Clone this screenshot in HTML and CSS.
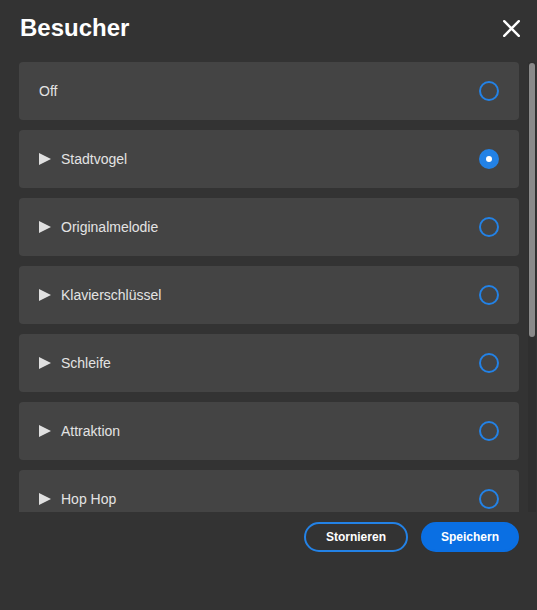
FILE: index.html
```html
<!DOCTYPE html>
<html lang="de">
  <head>
    <meta charset="UTF-8" />
    <title>Besucher</title>
    <meta name="viewport" content="width=device-width, initial-scale=1.0" />
    <link rel="stylesheet" href="styles.css">
  </head>
  <body>
    <div class="dialog">
      <div class="dialog-header">
        <h1>Besucher</h1>
        <button class="close-btn" aria-label="Schließen">
          <svg width="17" height="17" viewBox="0 0 17 17">
            <path d="M1.2 1.2 L15.8 15.8 M15.8 1.2 L1.2 15.8" stroke="#fff" stroke-width="2.4" stroke-linecap="round" fill="none" />
          </svg>
        </button>
      </div>

      <div class="list-wrap">
        <div class="sound-list">
          <label class="sound-item">
            <span class="sound-name">Off</span>
            <span class="radio"></span>
          </label>
          <label class="sound-item">
            <span class="play"></span>
            <span class="sound-name">Stadtvogel</span>
            <span class="radio checked"></span>
          </label>
          <label class="sound-item">
            <span class="play"></span>
            <span class="sound-name">Originalmelodie</span>
            <span class="radio"></span>
          </label>
          <label class="sound-item">
            <span class="play"></span>
            <span class="sound-name">Klavierschlüssel</span>
            <span class="radio"></span>
          </label>
          <label class="sound-item">
            <span class="play"></span>
            <span class="sound-name">Schleife</span>
            <span class="radio"></span>
          </label>
          <label class="sound-item">
            <span class="play"></span>
            <span class="sound-name">Attraktion</span>
            <span class="radio"></span>
          </label>
          <label class="sound-item">
            <span class="play"></span>
            <span class="sound-name">Hop Hop</span>
            <span class="radio"></span>
          </label>
        </div>
        <div class="scroll-track">
          <div class="scroll-thumb"></div>
        </div>
      </div>

      <div class="dialog-footer">
        <button class="btn btn-outline">Stornieren</button>
        <button class="btn btn-primary">Speichern</button>
      </div>
    </div>
  </body>
</html>
```

FILE: styles.css
```css
html,
body {
  margin: 0;
  height: 100%;
}

body {
  font-family: "Liberation Sans", Arial, sans-serif;
  background: #333333;
  color: #e3e3e3;
}

.dialog {
  height: 610px;
  background: #333333;
}

.dialog-header {
  display: flex;
  align-items: center;
  justify-content: space-between;
  padding: 14px 17px 0 20px;
}

.dialog-header h1 {
  margin: 0;
  font-size: 24px;
  line-height: 28px;
  font-weight: bold;
  color: #ffffff;
}

.close-btn {
  background: none;
  border: none;
  padding: 0;
  width: 17px;
  height: 17px;
  cursor: pointer;
}

.close-btn svg {
  display: block;
}

.list-wrap {
  display: flex;
  margin: 20px 0 0 19px;
  height: 450px;
}

.sound-list {
  width: 500px;
  overflow: hidden;
  display: flex;
  flex-direction: column;
  gap: 10px;
}

.scroll-track {
  width: 8px;
  margin-left: 9px;
  background: #2f2f2f;
}

.scroll-thumb {
  margin: 1px;
  height: 274px;
  background: #8a8a8a;
  border-radius: 3px;
}

.sound-item {
  flex: none;
  display: flex;
  align-items: center;
  height: 58px;
  padding: 0 20px;
  background: #444444;
  border-radius: 4px;
  cursor: pointer;
}

.play {
  width: 0;
  height: 0;
  border-top: 6.5px solid transparent;
  border-bottom: 6.5px solid transparent;
  border-left: 12px solid #e0e0e0;
  margin-right: 10px;
}

.sound-name {
  flex: 1;
  font-size: 14px;
}

.radio {
  box-sizing: border-box;
  width: 20px;
  height: 20px;
  border: 2px solid #2382e6;
  border-radius: 50%;
  position: relative;
}

.radio.checked {
  background: #2382e6;
}

.radio.checked::after {
  content: "";
  position: absolute;
  left: 5px;
  top: 5px;
  width: 6px;
  height: 6px;
  border-radius: 50%;
  background: #ffffff;
}

.dialog-footer {
  display: flex;
  justify-content: flex-end;
  gap: 13px;
  padding: 10px 18px 0 0;
}

.btn {
  height: 30px;
  padding: 0 20px;
  border-radius: 15px;
  font-family: inherit;
  font-size: 12px;
  font-weight: bold;
  color: #ffffff;
  cursor: pointer;
}

.btn-outline {
  background: transparent;
  border: 2px solid #2382e6;
}

.btn-primary {
  padding: 0 18px;
  background: #0a6fe3;
  border: 2px solid #0a6fe3;
}
```
